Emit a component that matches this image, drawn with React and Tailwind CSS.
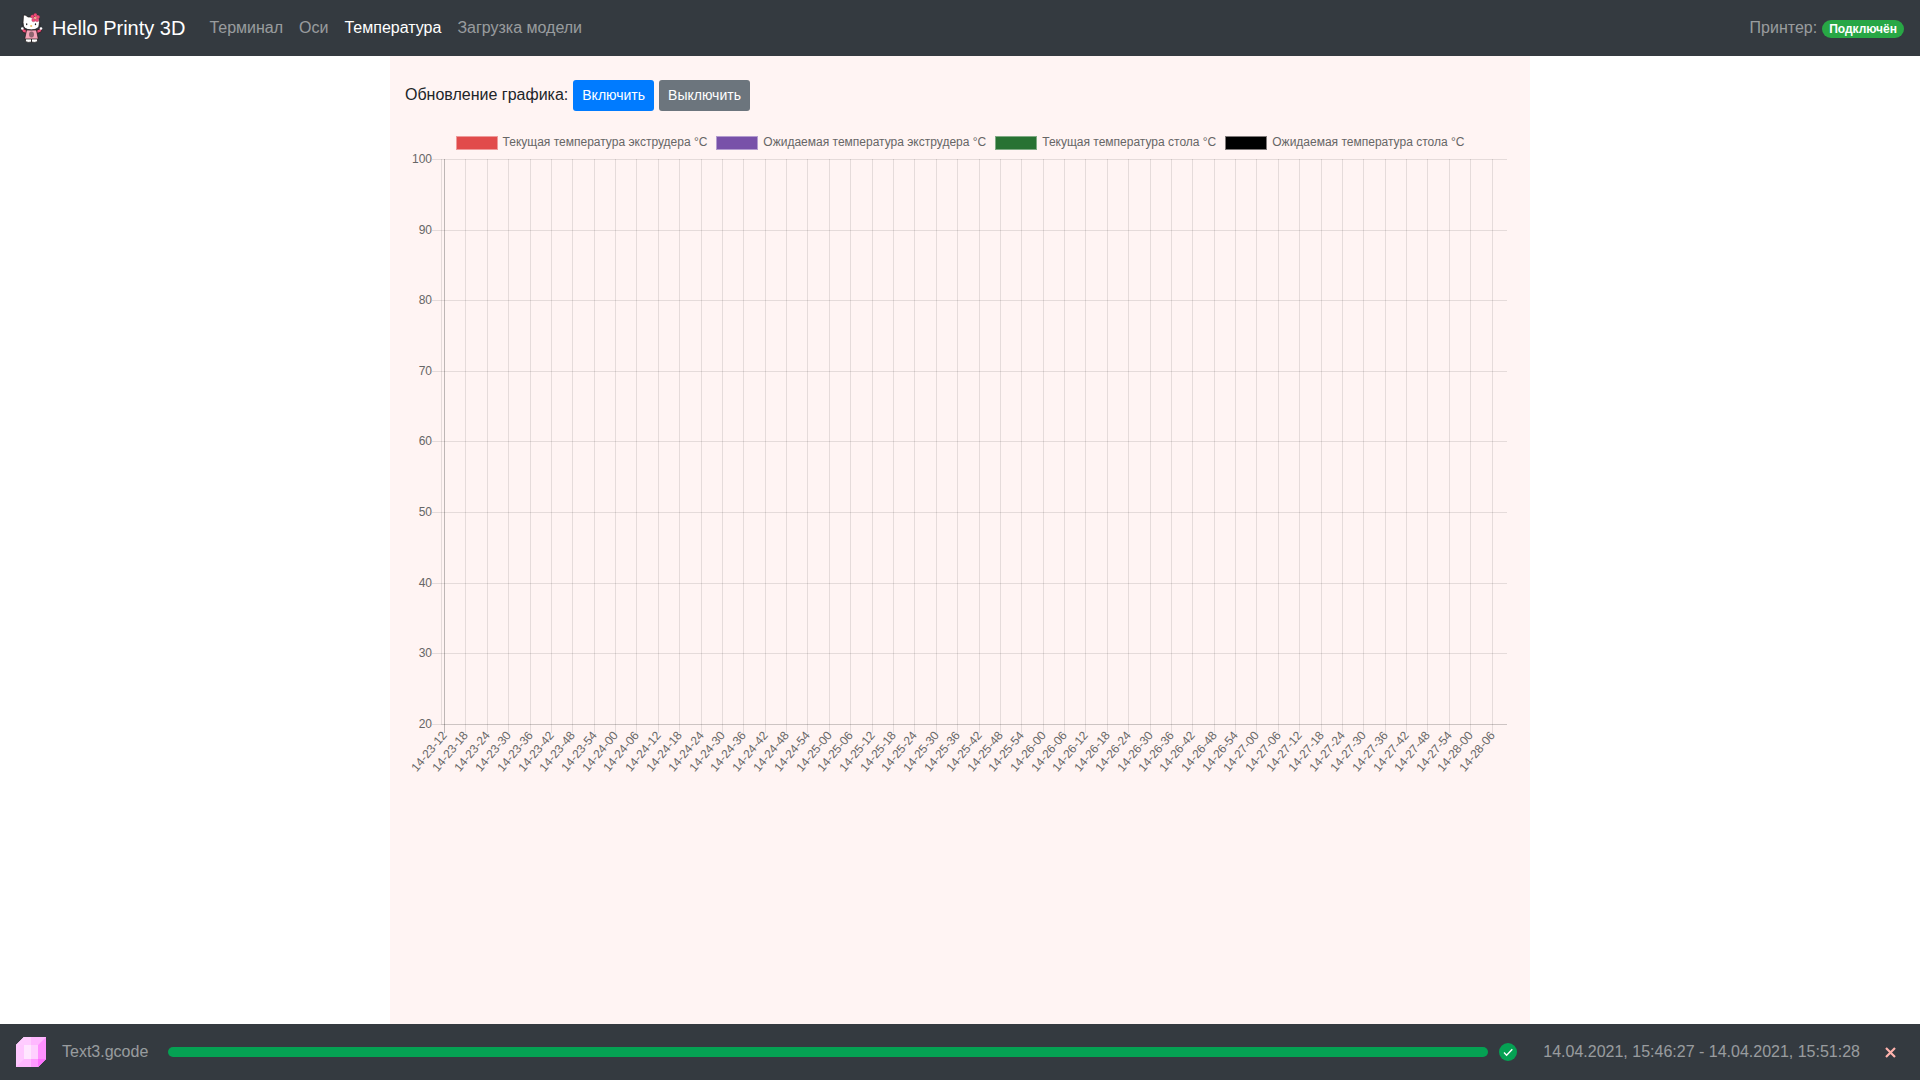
import { useState } from "react";

/* ================= DATA ================= */

const NAV = [
  { title: "Терминал", href: "#terminal" },
  { title: "Оси", href: "#axes" },
  { title: "Температура", href: "#temperature", active: true },
  { title: "Загрузка модели", href: "#upload" },
];

const SERIES = [
  { title: "Текущая температура экструдера °C", box: "bg-[#e14b4b] border-[#ee9a9a]" },
  { title: "Ожидаемая температура экструдера °C", box: "bg-[#7851a9] border-[#b39ccf]" },
  { title: "Текущая температура стола °C", box: "bg-[#287233] border-[#80aa84]" },
  { title: "Ожидаемая температура стола °C", box: "bg-black border-[#7f7979]" },
];

const Y_TICKS = [100, 90, 80, 70, 60, 50, 40, 30, 20];

// one label every 6 seconds, 14-23-12 ... 14-28-06
const X_TICKS = Array.from({ length: 50 }, (_, i) => {
  const s = 23 * 60 + 12 + i * 6;
  return `14-${Math.floor(s / 60)}-${String(s % 60).padStart(2, "0")}`;
});

/* ================= COMPONENT ================= */

export default function App() {
  return (
    <div className="flex min-h-screen flex-col bg-white font-['Liberation_Sans',Arial,sans-serif] text-base text-[#212529]">
      <Navbar />
      <main className="mx-auto w-full max-w-[1140px] flex-1 bg-[#fff4f3] px-[15px] pt-6">
        <TemperaturePanel />
      </main>
      <PrintStatus />
    </div>
  );
}

/* ================= HEADER ================= */

function Navbar() {
  return (
    <header className="flex h-14 items-center bg-[#343a40] px-4">
      <a href="#home" className="mr-4 flex items-center gap-1.5 text-xl text-white">
        <KittyLogo />
        Hello Printy 3D
      </a>
      <nav className="flex flex-1">
        {NAV.map((n) => (
          <a
            key={n.title}
            href={n.href}
            className={n.active ? "px-2 text-white" : "px-2 text-white/50 hover:text-white/75"}
          >
            {n.title}
          </a>
        ))}
      </nav>
      <div className="flex items-center gap-[5px] text-white/50">
        Принтер:
        <span className="mt-0.5 rounded-full bg-[#28a745] px-[7px] py-[3px] text-xs leading-3 font-bold text-white">
          Подключён
        </span>
      </div>
    </header>
  );
}

/* ================= CHART ================= */

function TemperaturePanel() {
  const [enabled, setEnabled] = useState(true);

  return (
    <>
      <div className="flex items-center gap-[5px]">
        <span className="pb-0.5">Обновление графика:</span>
        <button
          onClick={() => setEnabled(true)}
          aria-pressed={enabled}
          className="rounded-[3px] bg-[#007bff] px-[9px] py-[5px] text-sm leading-[21px] text-white"
        >
          Включить
        </button>
        <button
          onClick={() => setEnabled(false)}
          aria-pressed={!enabled}
          className="rounded-[3px] bg-[#6c757d] px-[9px] py-[5px] text-sm leading-[21px] text-white"
        >
          Выключить
        </button>
      </div>
      <ul className="mt-6 flex flex-wrap justify-center gap-x-[9px] text-xs text-[#666]">
        {SERIES.map((s) => (
          <li key={s.title} className="flex items-center gap-[5px]">
            <span className={`h-[14px] w-[42px] border ${s.box}`} />
            <span className="pb-0.5 leading-[14px]">{s.title}</span>
          </li>
        ))}
      </ul>
      <TemperatureChart />
    </>
  );
}

function TemperatureChart() {
  const x = (i) => Math.round(39 + i * 21.38) + 0.5;
  const y = (i) => Math.round(8 + i * 70.6) + 0.5;

  return (
    <svg
      viewBox="0 0 1110 630"
      className="block h-auto w-full text-xs"
      fill="#666"
      stroke="none"
      role="img"
      aria-label="Температура"
    >
      <g stroke="#000" strokeOpacity="0.1">
        {Y_TICKS.map((t, i) => (
          <line key={t} x1="27" x2="1102" y1={y(i)} y2={y(i)} />
        ))}
        {X_TICKS.map((t, i) => (
          <line key={t} x1={x(i)} x2={x(i)} y1="8" y2="582" />
        ))}
        <line x1="36.5" x2="36.5" y1="8" y2="573" />
        <line x1="36" x2="1102" y1={y(8)} y2={y(8)} />
        <line x1={x(0)} x2={x(0)} y1="8" y2="582" strokeOpacity="0.17" />
      </g>
      {Y_TICKS.map((t, i) => (
        <text key={t} x="27" y={y(i) - 1} textAnchor="end" dominantBaseline="central">
          {t}
        </text>
      ))}
      {X_TICKS.map((t, i) => (
        <text
          key={t}
          transform={`translate(${x(i)} 582) rotate(-50)`}
          textAnchor="end"
          dominantBaseline="central"
        >
          {t}
        </text>
      ))}
    </svg>
  );
}

/* ================= FOOTER ================= */

function PrintStatus() {
  return (
    <footer className="flex h-14 items-center bg-[#343a40] px-4 text-white/50">
      <CubeIcon />
      <span className="ml-4">Text3.gcode</span>
      <div
        role="progressbar"
        aria-label="Text3.gcode"
        aria-valuenow={100}
        className="ml-5 h-[10px] flex-1 rounded-full bg-[#05a153]"
      />
      <svg viewBox="0 0 18 18" className="ml-[11px] size-[18px]">
        <circle cx="9" cy="9" r="9" fill="#05a153" />
        <path d="M5 9.6 7.6 12.2 13.3 6.2" fill="none" stroke="#fff" strokeWidth="1.4" />
      </svg>
      <span className="ml-[26px]">14.04.2021, 15:46:27 - 14.04.2021, 15:51:28</span>
      <button aria-label="Закрыть" className="ml-[25px] mr-2">
        <svg viewBox="0 0 11 11" className="size-[11px]">
          <path d="M1 1 10 10M10 1 1 10" stroke="#ffb3ad" strokeWidth="2.2" />
        </svg>
      </button>
    </footer>
  );
}

/* ================= ICONS ================= */

function KittyLogo() {
  return (
    <svg viewBox="0 0 30 30" className="size-[30px]">
      <g stroke="#1d1719" strokeWidth="0.7">
        <path d="M9.500 25h6v4q-3.500 1-6-.5zM15.500 25h6v3.500q-2.500 1.500-6 .5z" fill="#fff" />
        <path d="M11 17.500 7 15.500q-2 1-.5 3.500l4 1.500zM20.500 17.500l4-2q2 1 .5 3.500l-4 1.500z" fill="#ef4f7b" />
        <path d="M10.500 17h10l1.800 9H8.700z" fill="#f5a3b8" />
        <path d="M7 10 7.500 2q2-.5 4.500 2h6q2.500-2.500 4.500-2l1 8q.5 6.800-8.200 6.800T7 10z" fill="#fff" />
      </g>
      <circle cx="6.300" cy="15.500" r="1.300" fill="#fff" />
      <circle cx="25" cy="15.500" r="1.300" fill="#fff" />
      <ellipse cx="15.500" cy="21.500" rx="2.500" ry="3" fill="#8f6570" />
      <g fill="#f14a77" stroke="#8b213f" strokeWidth="0.300">
        <circle cx="16.500" cy="3.500" r="1.800" />
        <circle cx="19.300" cy="2" r="1.800" />
        <circle cx="22" cy="4" r="1.800" />
        <circle cx="21" cy="7" r="1.800" />
        <circle cx="17.500" cy="7" r="1.800" />
      </g>
      <circle cx="19.300" cy="4.800" r="1" fill="#f6a56a" />
      <ellipse cx="10.700" cy="11.300" rx="0.700" ry="1" fill="#222" />
      <ellipse cx="19.500" cy="11.300" rx="0.700" ry="1" fill="#222" />
      <ellipse cx="15.200" cy="13" rx="1.100" ry="0.700" fill="#e5a52d" />
      <path d="M5.500 11h2.500M5.500 13l2.500-.5M22.500 11h2.500M22.500 12.500l2.500.5" stroke="#222" strokeWidth="0.500" />
    </svg>
  );
}

function CubeIcon() {
  return (
    <svg viewBox="0 0 30 30" className="size-[30px]">
      <path d="M0 8 8 0h22v22l-8 8H0z" fill="#ffc8ff" />
      <path d="M0 8 8 0h7v8z" fill="#ffe6ff" />
      <path d="M8 0h7v8H0z" fill="#ffccff" />
      <path d="M15 0h15l-8 8h-7z" fill="#ffb8ff" />
      <path d="M30 0v22l-8 8V8z" fill="#ff91ff" />
      <path d="M8 8h7v14H8z" fill="#ffe6ff" />
      <path d="M15 8h7v14h-7z" fill="#ffd0ff" />
      <path d="M0 30l8-8h7v8z" fill="#ffb8ff" />
      <path d="M15 22h7v8h-7z" fill="#ff99ff" />
      <path d="M22 22h8l-8 8z" fill="#ff70ff" />
    </svg>
  );
}
